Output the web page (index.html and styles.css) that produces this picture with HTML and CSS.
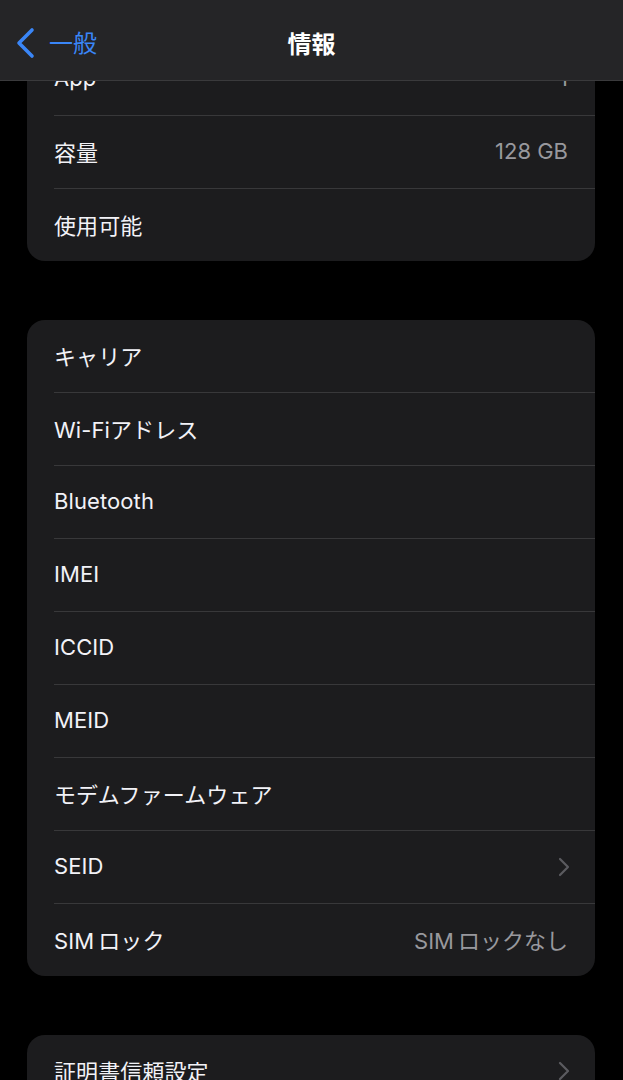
FILE: index.html
```html
<!DOCTYPE html>
<html lang="ja">
<head>
<meta charset="utf-8">
<link rel="stylesheet" href="styles.css">
</head>
<body>
<header class="nav">
  <div class="back">
    <svg class="back-chev" width="22" height="32" viewBox="0 0 22 32"><path d="M18 3 L5 16 L18 29" fill="none" stroke="#3a86f7" stroke-width="3.6" stroke-linecap="round" stroke-linejoin="round"/></svg>
    <span class="back-label">一般</span>
  </div>
  <div class="title">情報</div>
</header>
<main class="content">
  <section class="card card-first">
    <div class="row"><span class="label">App</span><span class="value">1</span></div>
    <div class="row"><span class="label">容量</span><span class="value">128 GB</span></div>
    <div class="row"><span class="label">使用可能</span><span class="value"></span></div>
  </section>
  <section class="card">
    <div class="row"><span class="label">キャリア</span></div>
    <div class="row"><span class="label">Wi-Fiアドレス</span></div>
    <div class="row"><span class="label">Bluetooth</span></div>
    <div class="row"><span class="label">IMEI</span></div>
    <div class="row"><span class="label">ICCID</span></div>
    <div class="row"><span class="label">MEID</span></div>
    <div class="row"><span class="label">モデムファームウェア</span></div>
    <div class="row"><span class="label">SEID</span><svg class="chev" width="12" height="20" viewBox="0 0 12 20"><path d="M2 2 L10 10 L2 18" fill="none" stroke="#5b5b60" stroke-width="2.2" stroke-linecap="round" stroke-linejoin="round"/></svg></div>
    <div class="row"><span class="label">SIM<span class="jgap"></span>ロック</span><span class="value">SIM<span class="jgap"></span>ロックなし</span></div>
  </section>
  <section class="card">
    <div class="row"><span class="label">証明書信頼設定</span><svg class="chev" width="12" height="20" viewBox="0 0 12 20"><path d="M2 2 L10 10 L2 18" fill="none" stroke="#5b5b60" stroke-width="2.2" stroke-linecap="round" stroke-linejoin="round"/></svg></div>
  </section>
</main>
</body>
</html>
```
FILE: styles.css
```css
* { box-sizing: border-box; }
html, body {
  margin: 0;
  padding: 0;
  background: #000;
  width: 623px;
  height: 1080px;
  overflow: hidden;
  font-family: "Inter", "Noto Sans CJK JP", sans-serif;
  color: #f2f2f7;
}
.nav {
  position: fixed;
  top: 0;
  left: 0;
  right: 0;
  height: 81px;
  background: #252527;
  border-bottom: 1px solid #3a3a3c;
  z-index: 10;
  display: flex;
  align-items: center;
  justify-content: center;
}
.back {
  position: absolute;
  left: 14px;
  top: 27px;
  display: flex;
  align-items: center;
  gap: 13px;
}
.back-chev { display: block; }
.back-label {
  color: #3a86f7;
  font-size: 24px;
  line-height: 32px;
  font-family: "Noto Sans CJK JP", sans-serif;
  margin-top: -2px;
}
.title {
  font-size: 24px;
  font-weight: 700;
  font-family: "Noto Sans CJK JP", sans-serif;
  color: #fff;
  margin-top: 5px;
}
.content {
  display: flex;
  flex-direction: column;
  gap: 59px;
  padding: 43px 28px 0 27px;
}
.card {
  background: #1c1c1e;
  border-radius: 18px;
  padding-left: 27px;
  overflow: hidden;
}
.card-first {
  border-top-left-radius: 0;
  border-top-right-radius: 0;
}
.row {
  height: 73px;
  display: flex;
  align-items: center;
  justify-content: space-between;
  padding-right: 27px;
  padding-bottom: 3px;
  border-bottom: 1px solid #38383a;
  font-size: 22px;
}
.row:last-child { border-bottom: none; height: 72px; }
.label { color: #f2f2f7; letter-spacing: 0.1px; }
.value { color: #98989d; }
.jgap { display: inline-block; width: 4px; }
.chev { display: block; margin-right: -2px; margin-top: 3px; }
```
